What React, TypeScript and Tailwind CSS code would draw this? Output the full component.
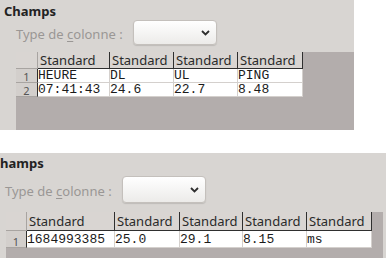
import React from "react";

type TableProps = {
  rows: string[][];
  cols: number[];
  headH: number;
  rowH: number;
};

const sans = { fontFamily: '"Noto Sans", "DejaVu Sans", sans-serif' };
const mono = { fontFamily: '"Liberation Mono", "DejaVu Sans Mono", monospace' };

function Chevron() {
  return (
    <svg width="9" height="6" viewBox="0 0 9 6" className="block">
      <path d="M1 1 L4.5 4.5 L8 1" fill="none" stroke="#2e2e2e" strokeWidth="1.8" />
    </svg>
  );
}

function Select({ cls }: { cls: string }) {
  return (
    <div
      className={
        "flex items-center justify-end rounded-[4px] border border-[#c4c0bc] bg-gradient-to-b from-[#ffffff] to-[#ecebe9] pr-[6px] shadow-[0_1px_1px_rgba(0,0,0,0.12)] " +
        cls
      }
    >
      <Chevron />
    </div>
  );
}

function Label() {
  return (
    <span className="text-[13px] text-[#9a9795]" style={sans}>
      Type de <span className="underline underline-offset-2">c</span>olonne :
    </span>
  );
}

function Table({ rows, cols, headH, rowH }: TableProps) {
  const [rh, ...dc] = cols;
  return (
    <div className="flex flex-col">
      <div className="flex" style={{ height: headH }}>
        <div className="border-r border-b border-[#a8a4a1] bg-[#d9d5d2]" style={{ width: rh }} />
        {dc.map((w, i) => (
          <div
            key={i}
            className="flex items-center border-r border-b border-[#2f2f2f] bg-[#d9d5d2] pl-[2px] text-[13px] leading-none text-[#2a2a2a]"
            style={{ ...sans, width: w }}
          >
            Standard
          </div>
        ))}
      </div>
      {rows.map((r, ri) => (
        <div key={ri} className="flex" style={{ height: rowH }}>
          <div
            className="flex items-end justify-center border-r border-r-[#2f2f2f] border-b border-b-[#a8a4a1] bg-[#d3cfcc] text-[11px] leading-[10px] text-[#555]"
            style={{ ...sans, width: rh }}
          >
            {ri + 1}
          </div>
          {dc.map((w, ci) => (
            <div
              key={ci}
              className="flex items-center border-r border-b border-[#d4d0cd] bg-white text-[13px] leading-none text-[#1a1a1a]"
              style={{ ...mono, width: w }}
            >
              {r[ci] ?? ""}
            </div>
          ))}
        </div>
      ))}
    </div>
  );
}

export default function App() {
  return (
    <div className="flex h-[266px] w-[392px] flex-col overflow-hidden bg-white">
      {/* first capture */}
      <div className="flex h-[130px] w-[354px] flex-col bg-[#d8d5d2]">
        <div className="h-[18px] pl-[4px] pt-[2px] text-[13px] font-bold leading-[18px] text-[#222]" style={sans}>
          Champs
        </div>
        <div className="mt-[2px] flex items-center">
          <div className="w-[133px] pl-[16px]">
            <Label />
          </div>
          <Select cls="h-[25px] w-[84px]" />
        </div>
        <div className="ml-[16px] mt-[7px] flex-1 bg-[#b3adac]">
          <Table
            rows={[
              ["HEURE", "DL", "UL", "PING"],
              ["07:41:43", "24.6", "22.7", "8.48"],
            ]}
            cols={[22, 72, 64, 64, 65]}
            headH={17}
            rowH={14}
          />
        </div>
      </div>

      {/* second capture, its left edge is cut off */}
      <div className="mt-[23px] flex h-[105px] w-[386px] flex-col bg-[#d8d5d2]">
        <div className="h-[18px] pt-[1px] text-[13px] font-bold leading-[18px] text-[#222]" style={sans}>
          hamps
        </div>
        <div className="mt-[5px] flex items-center">
          <div className="w-[122px] pl-[5px]">
            <Label />
          </div>
          <Select cls="h-[27px] w-[84px]" />
        </div>
        <div className="ml-[6px] mr-[3px] mt-[9px] flex-1 bg-[#b3adac]">
          <Table
            rows={[["1684993385", "25.0", "29.1", "8.15", "ms"]]}
            cols={[21, 88, 65, 63, 64, 65]}
            headH={19}
            rowH={17}
          />
        </div>
      </div>
    </div>
  );
}
